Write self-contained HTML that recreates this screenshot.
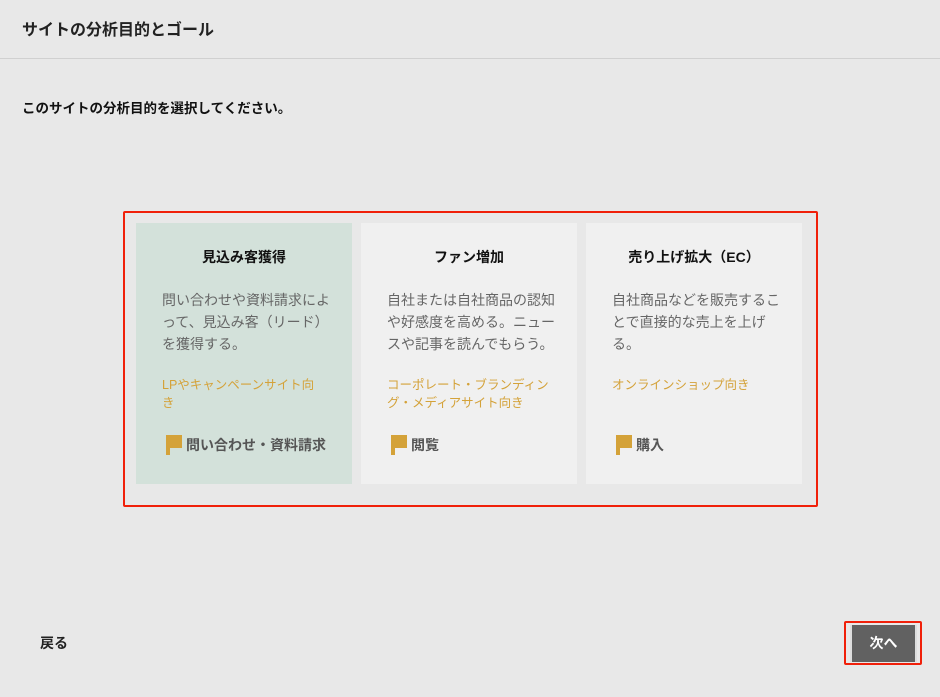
<!DOCTYPE html>
<html><head><meta charset="utf-8"><style>
*{margin:0;padding:0;box-sizing:border-box}
body{width:940px;height:697px;background:#e8e8e8;font-family:"Liberation Sans","Noto Sans CJK JP",sans-serif;position:relative;overflow:hidden;color:#222}
.hd{position:absolute;left:0;top:0;width:940px;height:59px;border-bottom:1px solid #d0d0d0}
.hd h1{position:absolute;left:22px;top:16px;font-size:16px;font-weight:bold;color:#222}
.q{position:absolute;left:22px;top:97px;font-size:13.5px;font-weight:bold;color:#111}
.box{position:absolute;left:123px;top:211px;width:695px;height:296px;border:2px solid #f0200a;border-radius:2px}
.card{position:absolute;top:223px;width:216px;height:261px;background:#f0f0f0}
.card.sel{background:#d3e1da}
.card h2{position:absolute;top:24px;left:0;width:100%;text-align:center;font-size:14px;font-weight:bold;color:#111}
.card p{position:absolute;top:66px;left:26px;width:170px;font-size:14px;line-height:22px;color:#666}
.card .t{position:absolute;left:26px;font-size:12.5px;line-height:18px;color:#d4a239;width:164px}
.card .g{position:absolute;top:212px;left:30px;font-size:14px;font-weight:bold;color:#555;display:flex;align-items:center}
.flag{display:inline-block;width:18px;height:20px;position:relative;margin-right:2px}
.flag:before{content:"";position:absolute;left:0;top:0;width:4px;height:20px;background:#d4a239}
.flag:after{content:"";position:absolute;left:4px;top:0;width:12px;height:13px;background:#d4a239}
.back{position:absolute;left:40px;top:633px;font-size:14px;font-weight:bold;color:#222}
.nb{position:absolute;left:844px;top:621px;width:78px;height:44px;border:2px solid #f0200a;border-radius:2px}
.nb div{position:absolute;left:4px;top:2px;width:67px;height:37px;background:#616161;border-left:2px solid #ddd;border-right:2px solid #ddd;color:#fff;font-weight:bold;font-size:14px;text-align:center;line-height:37px}
</style></head><body>
<div class="hd"><h1>サイトの分析目的とゴール</h1></div>
<div class="q">このサイトの分析目的を選択してください。</div>
<div class="box"></div>
<div class="card sel" style="left:136px"><h2>見込み客獲得</h2><p>問い合わせや資料請求によって、見込み客（リード）を獲得する。</p><div class="t" style="top:153px">LPやキャンペーンサイト向き</div><div class="g"><span class="flag"></span>問い合わせ・資料請求</div></div>
<div class="card" style="left:361px"><h2>ファン増加</h2><p>自社または自社商品の認知や好感度を高める。ニュースや記事を読んでもらう。</p><div class="t" style="top:153px">コーポレート・ブランディング・メディアサイト向き</div><div class="g"><span class="flag"></span>閲覧</div></div>
<div class="card" style="left:586px"><h2>売り上げ拡大（EC）</h2><p>自社商品などを販売することで直接的な売上を上げる。</p><div class="t" style="top:153px">オンラインショップ向き</div><div class="g"><span class="flag"></span>購入</div></div>
<div class="back">戻る</div>
<div class="nb"><div>次へ</div></div>
</body></html>
